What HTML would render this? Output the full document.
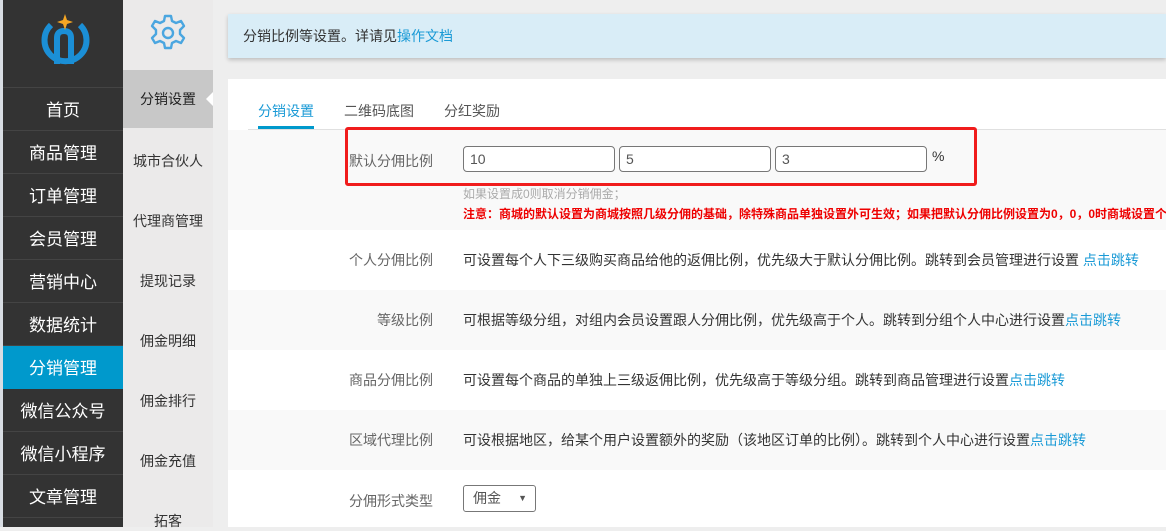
<!DOCTYPE html>
<html><head><meta charset="utf-8"><style>
*{margin:0;padding:0;box-sizing:border-box}
body{width:1166px;height:527px;overflow:hidden;background:#eeeeee;font-family:"Liberation Sans","Noto Sans CJK SC",sans-serif;position:relative}
#s1{position:absolute;left:0;top:0;width:123px;height:527px;background:#333333;border-left:3px solid #d8dde3}
#s1 .logo{height:88px;border-bottom:1px solid #444}
#s1 .it{height:43px;line-height:46px;text-align:center;color:#fff;font-size:17px;border-bottom:1px solid #444}
#s1 .it.on{background:#0099cc;border-bottom-color:#0099cc}
#s2{position:absolute;left:123px;top:0;width:90px;height:527px;background:#ebeaea}
#s2 .it{position:absolute;left:0;width:90px;text-align:center;font-size:14px;color:#333}
#s2 .on{top:70px;height:58px;line-height:58px;background:#c8c8c8;font-size:14px;color:#222}
#s2 .on:after{content:"";position:absolute;right:0;top:22px;border:7px solid transparent;border-right-color:#fff}
.notice{position:absolute;left:228px;top:14px;width:938px;height:44px;background:#d9edf7;box-shadow:0 2px 4px rgba(0,0,0,.2);padding-left:15px;line-height:44px;font-size:14px;color:#333}
.notice a{color:#1a9ad6;text-decoration:none}
.card{position:absolute;left:228px;top:79px;width:938px;height:448px;background:#fff;overflow:hidden}
.tab{position:absolute;top:22px;font-size:14px;color:#555}
.tabline{position:absolute;left:20px;top:50px;width:918px;height:1px;background:#e0e0e0}
.row{position:absolute;left:0;width:938px;overflow:hidden}
.g{background:#f9f9f9}
.lbl{position:absolute;right:733px;font-size:14px;color:#666;white-space:nowrap}
.txt{position:absolute;left:235px;font-size:14px;color:#333;white-space:nowrap}
.txt a{color:#1a9ad6}
.inp{position:absolute;top:16px;width:152px;height:26px;border:1px solid #777;border-radius:4px;background:#fff;font-size:14px;color:#555;padding-left:6px;line-height:24px}
</style></head><body>
<div id="s1">
<div class="logo"><svg width="120" height="88" viewBox="0 0 120 88">
<path d="M48 25 A21 21 0 1 0 77 25" fill="none" stroke="#1b8fd6" stroke-width="6"/>
<path d="M54 64 V38 Q54 31 61 31 Q68 31 68 38 V64" fill="none" stroke="#1b8fd6" stroke-width="6"/>
<path d="M62 14 L64 20 L70 22 L64 24 L62 30 L60 24 L54 22 L60 20Z" fill="#f5a623"/>
</svg></div>
<div class="it">首页</div><div class="it">商品管理</div><div class="it">订单管理</div><div class="it">会员管理</div><div class="it">营销中心</div><div class="it">数据统计</div><div class="it on">分销管理</div><div class="it">微信公众号</div><div class="it">微信小程序</div><div class="it">文章管理</div>
</div>
<div id="s2">
<svg style="position:absolute;left:25px;top:13px" width="40" height="40" viewBox="0 0 40 40"><path d="M17 3h6l1 5 4 2 5-2 3 5-4 4v4l4 4-3 5-5-2-4 2-1 5h-6l-1-5-4-2-5 2-3-5 4-4v-4l-4-4 3-5 5 2 4-2z" fill="none" stroke="#4aa6e0" stroke-width="2.4" stroke-linejoin="round"/><circle cx="20" cy="20" r="5" fill="none" stroke="#4aa6e0" stroke-width="2.4"/></svg>
<div class="it on">分销设置</div>
<div class="it" style="top:151px">城市合伙人</div>
<div class="it" style="top:211px">代理商管理</div>
<div class="it" style="top:271px">提现记录</div>
<div class="it" style="top:331px">佣金明细</div>
<div class="it" style="top:391px">佣金排行</div>
<div class="it" style="top:451px">佣金充值</div>
<div class="it" style="top:511px">拓客</div>
</div>
<div class="notice">分销比例等设置。详请见<a>操作文档</a></div>
<div class="card">
<div class="tab" style="left:30px;color:#1a9ad6">分销设置</div>
<div style="position:absolute;left:30px;top:47px;width:56px;height:3px;background:#0099cc"></div>
<div class="tab" style="left:116px">二维码底图</div>
<div class="tab" style="left:216px">分红奖励</div>
<div class="tabline"></div>
<div class="row g" style="top:51px;height:100px">
<div class="lbl" style="top:21px">默认分佣比例</div>
<div class="inp" style="left:235px">10</div>
<div class="inp" style="left:391px">5</div>
<div class="inp" style="left:547px">3</div>
<div style="position:absolute;left:704px;top:18px;font-size:14px;color:#333">%</div>
<div class="txt" style="top:55px;color:#aaa;font-size:12px">如果设置成0则取消分销佣金；</div>
<div class="txt" style="top:75px;color:#e00;font-size:12px;font-weight:bold">注意：商城的默认设置为商城按照几级分佣的基础，除特殊商品单独设置外可生效；如果把默认分佣比例设置为0，0，0时商城设置个</div>
</div>
<div style="position:absolute;left:117px;top:48px;width:632px;height:59px;border:3px solid #f01c1c;border-radius:3px"></div>
<div class="row" style="top:151px;height:60px"><div class="lbl" style="top:20px">个人分佣比例</div><div class="txt" style="top:20px">可设置每个人下三级购买商品给他的返佣比例，优先级大于默认分佣比例。跳转到会员管理进行设置 <a>点击跳转</a></div></div>
<div class="row g" style="top:211px;height:60px"><div class="lbl" style="top:20px">等级比例</div><div class="txt" style="top:20px">可根据等级分组，对组内会员设置跟人分佣比例，优先级高于个人。跳转到分组个人中心进行设置<a>点击跳转</a></div></div>
<div class="row" style="top:271px;height:60px"><div class="lbl" style="top:20px">商品分佣比例</div><div class="txt" style="top:20px">可设置每个商品的单独上三级返佣比例，优先级高于等级分组。跳转到商品管理进行设置<a>点击跳转</a></div></div>
<div class="row g" style="top:331px;height:60px"><div class="lbl" style="top:20px">区域代理比例</div><div class="txt" style="top:20px">可设根据地区，给某个用户设置额外的奖励（该地区订单的比例）。跳转到个人中心进行设置<a>点击跳转</a></div></div>
<div class="row" style="top:391px;height:57px"><div class="lbl" style="top:21px">分佣形式类型</div>
<div style="position:absolute;left:235px;top:15px;width:73px;height:27px;border:1px solid #777;border-radius:3px;font-size:14px;color:#555;padding-left:9px;line-height:25px">佣金<span style="position:absolute;right:8px;font-size:9px">▼</span></div></div>
</div>
</body></html>
